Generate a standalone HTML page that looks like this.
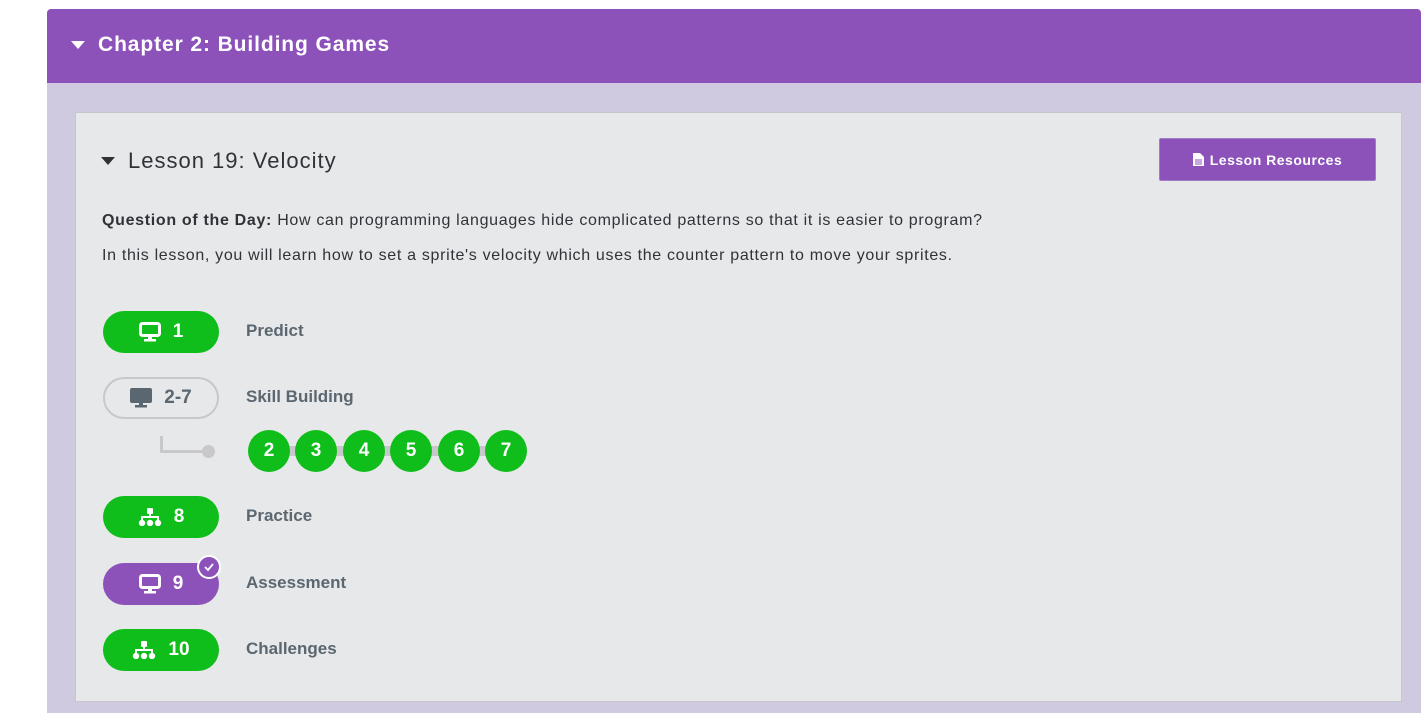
<!DOCTYPE html>
<html><head><style>
body{margin:0;width:1426px;height:713px;background:#fff;font-family:"Liberation Sans",sans-serif;position:relative;overflow:hidden}
.hdr{position:absolute;left:47px;top:9px;width:1374px;height:74px;background:#8c52ba;border-radius:4px 4px 0 0;color:#fff}
.hdr .t{position:absolute;left:51px;top:24px;font-size:21px;font-weight:bold;letter-spacing:0.9px}
.tri{position:absolute;width:0;height:0;border-left:7px solid transparent;border-right:7px solid transparent;border-top:8px solid #fff}
.bg{position:absolute;left:47px;top:83px;width:1374px;height:630px;background:#cfcadf}
.card{position:absolute;left:75px;top:112px;width:1325px;height:588px;background:#e7e8ea;border:1px solid #c6c6cc}
.abs{position:absolute}
.pill{position:absolute;left:103px;width:116px;height:42px;border-radius:21px;background:#0fbe1a;color:#fff;font-weight:bold;font-size:19px;display:flex;align-items:center;justify-content:center;box-sizing:border-box}
.pill svg{margin-right:12px}
.lab{position:absolute;left:246px;font-size:17px;font-weight:bold;color:#5b6770}
.dot{position:absolute;top:430px;width:42px;height:42px;border-radius:50%;background:#0fbe1a;color:#fff;font-weight:bold;font-size:19px;text-align:center;line-height:42px}
.txt{position:absolute;left:102px;font-size:16px;letter-spacing:0.68px;color:#2f3338;white-space:nowrap}
</style></head><body>
<div class="hdr"><div class="tri" style="left:24px;top:32px"></div><div class="t">Chapter 2: Building Games</div></div>
<div class="bg"></div>
<div class="card"></div>
<div class="tri" style="left:101px;top:157px;border-top-color:#2f3338"></div>
<div class="abs" style="left:128px;top:148px;font-size:22px;letter-spacing:1px;color:#2f3338">Lesson 19: Velocity</div>
<div class="abs" style="left:1159px;top:138px;width:217px;height:43px;background:#8c52ba;border:1px solid #a07cc4;border-radius:2px;box-sizing:border-box;color:#fff;font-weight:bold;font-size:14px;letter-spacing:0.5px;display:flex;align-items:center;justify-content:center">
<svg width="11" height="13" viewBox="0 0 11 13" style="margin-right:6px"><path d="M0 0H7L11 4V13H0Z" fill="#fff"/><path d="M2 7H9M2 9H9M2 11H9" stroke="#8c52ba" stroke-width="1"/></svg>Lesson Resources</div>
<div class="txt" style="top:212px"><b>Question of the Day:</b> How can programming languages hide complicated patterns so that it is easier to program?</div>
<div class="txt" style="top:247px">In this lesson, you will learn how to set a sprite's velocity which uses the counter pattern to move your sprites.</div>

<div class="pill" style="top:311px"><svg width="22" height="20" viewBox="0 0 22 20"><rect x="1.5" y="1.5" width="19" height="12" rx="2" fill="none" stroke="#fff" stroke-width="3"/><rect x="9" y="14" width="4" height="3" fill="#fff"/><rect x="5" y="17" width="12" height="2.5" fill="#fff"/></svg>1</div>
<div class="lab" style="top:321px">Predict</div>

<div class="pill" style="top:377px;background:#e7e8ea;border:2px solid #c8c8cc;color:#5b6770"><svg width="22" height="20" viewBox="0 0 22 20"><rect x="0" y="0" width="22" height="15" rx="2" fill="#5b6770"/><rect x="9" y="14" width="4" height="3" fill="#5b6770"/><rect x="5" y="17" width="12" height="2.5" fill="#5b6770"/></svg>2-7</div>
<div class="lab" style="top:387px">Skill Building</div>
<div class="abs" style="left:160px;top:436px;width:3px;height:17px;background:#c8c8cc"></div>
<div class="abs" style="left:160px;top:450px;width:48px;height:3px;background:#c8c8cc"></div>
<div class="abs" style="left:202px;top:445px;width:13px;height:13px;border-radius:50%;background:#c8c8cc"></div>
<div class="abs" style="left:270px;top:446px;width:236px;height:10px;background:#c8c8cc"></div>
<div class="dot" style="left:248px">2</div><div class="dot" style="left:295px">3</div><div class="dot" style="left:343px">4</div><div class="dot" style="left:390px">5</div><div class="dot" style="left:438px">6</div><div class="dot" style="left:485px">7</div>

<div class="pill" style="top:496px"><svg width="24" height="18" viewBox="0 0 24 18"><rect x="9" y="0" width="6" height="6" rx="1" fill="#fff"/><path d="M12 6V9M4 12V9H20V12" stroke="#fff" stroke-width="2" fill="none"/><circle cx="4" cy="15" r="3.2" fill="#fff"/><circle cx="12" cy="15" r="3.2" fill="#fff"/><circle cx="20" cy="15" r="3.2" fill="#fff"/></svg>8</div>
<div class="lab" style="top:506px">Practice</div>

<div class="pill" style="top:563px;background:#8c52ba"><svg width="22" height="20" viewBox="0 0 22 20"><rect x="1.5" y="1.5" width="19" height="12" rx="2" fill="none" stroke="#fff" stroke-width="3"/><rect x="9" y="14" width="4" height="3" fill="#fff"/><rect x="5" y="17" width="12" height="2.5" fill="#fff"/></svg>9</div>
<div class="abs" style="left:197px;top:555px;width:24px;height:24px;border-radius:50%;background:#8c52ba;border:2px solid #fff;box-sizing:border-box"><svg width="20" height="20" viewBox="0 0 20 20"><path d="M6 10L9 13L14 7" stroke="#fff" stroke-width="1.8" fill="none"/></svg></div>
<div class="lab" style="top:573px">Assessment</div>

<div class="pill" style="top:629px"><svg width="24" height="18" viewBox="0 0 24 18"><rect x="9" y="0" width="6" height="6" rx="1" fill="#fff"/><path d="M12 6V9M4 12V9H20V12" stroke="#fff" stroke-width="2" fill="none"/><circle cx="4" cy="15" r="3.2" fill="#fff"/><circle cx="12" cy="15" r="3.2" fill="#fff"/><circle cx="20" cy="15" r="3.2" fill="#fff"/></svg>10</div>
<div class="lab" style="top:639px">Challenges</div>
</body></html>
